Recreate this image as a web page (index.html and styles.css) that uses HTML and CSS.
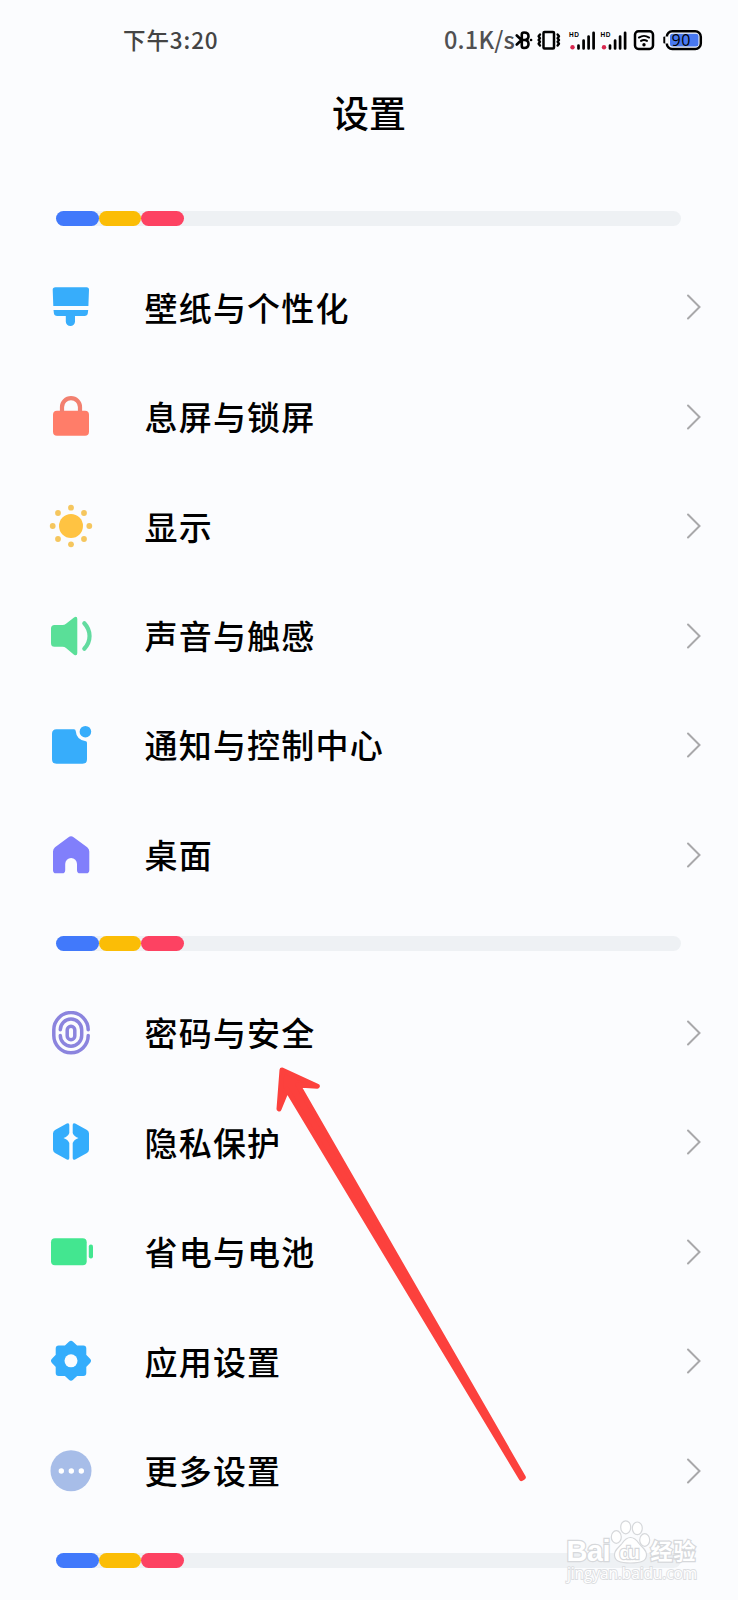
FILE: index.html
```html
<!DOCTYPE html>
<html lang="zh-CN">
<head>
<meta charset="utf-8">
<title>设置</title>
<link rel="stylesheet" href="styles.css">
</head>
<body>
<div class="screen">
  <header class="status">
    <span class="time">下午3:20</span>
    <div class="status-right">
      <span class="speed">0.1K/s</span>
      <svg class="status-icons" width="192" height="24" viewBox="0 0 192 24">
        <g fill="none" stroke="#000" stroke-width="2.600" stroke-linecap="round" stroke-linejoin="round">
          <path d="M6.800 11.500V6.500Q6.800 4.500 9 4.500q4.500 0 4.500 3.700T9.500 12q4 0 4 4t-4.500 4q-2.200 0-2.200-2V12.500M1.800 7.500 6.500 12h3M1.800 16.500 6.500 12M16 12h.1"/>
          <rect x="28.500" y="4" width="10.500" height="16.500" rx="1" stroke-width="2.500"/>
          <path d="M25 6.500l-1.400 1.800L25 10.200 23.600 12 25 13.800l-1.400 1.900L25 17.500M42.600 6.500 44 8.300l-1.400 1.900L44 12l-1.400 1.800 1.400 1.900-1.400 1.800" stroke-width="2.400"/>
        </g>
        <g stroke="#000" stroke-width="2.700" stroke-linecap="round">
          <path d="M63.500 17.500v3M68.600 12.500v8M73.600 8.500v12M78.600 4.800v15.700"/>
          <path d="M95 17.500v3M100.100 12.500v8M105.100 8.500v12M110.100 4.800v15.700"/>
        </g>
        <g class="hd"><text x="54" y="9" textLength="10">HD</text><text x="85.500" y="9" textLength="10">HD</text></g>
        <circle cx="57.500" cy="19.300" r="2.200" fill="#d8284f"/>
        <circle cx="89" cy="19.300" r="2.200" fill="#d8284f"/>
        <g fill="none" stroke="#000" stroke-width="2.500" stroke-linecap="round">
          <rect x="120" y="3.300" width="18" height="17.700" rx="3.500"/>
          <path d="M123.900 9.600q5.100-3.400 10.200 0M126 12.900q3-1.900 6 0" stroke-width="1.900"/>
          <rect x="151.800" y="3.300" width="34" height="17.700" rx="5.500"/>
          <path d="M149.300 9.500v5" stroke-width="2"/>
        </g>
        <circle cx="129" cy="16.700" r="1.700"/>
        <path d="M151.700 8.500v7" stroke="#fbfcfe" stroke-width="2.600"/>
        <rect x="155" y="5.800" width="28.500" height="12.700" rx="2.500" fill="#4878f0"/>
        <text class="level" x="156.500" y="17.600" textLength="19">90</text>
      </svg>
    </div>
  </header>
  <h1 class="title">设置</h1>

  <div class="divider"><div class="track"><i class="seg blue"></i><i class="seg yellow"></i><i class="seg red"></i></div></div>

  <ul class="group">
    <li class="row">
      <svg class="icon" viewBox="0 0 44 44" fill="#37adfb"><path d="M6.500 2.200h31q2.600 0 2.500 2.600L39.400 21H4.300L3.700 4.800Q3.600 2.200 6.500 2.200zM4.500 25h34.700l-.4 3.300q-.4 2.700-3.300 2.700H26v5.500a4.600 4.600 0 0 1-9.200 0V31H8.200q-2.900 0-3.300-2.700z"/></svg>
      <span class="label">壁纸与个性化</span><svg class="chev" viewBox="0 0 16 26"><path d="M2 1.500 13.500 13 2 24.500"/></svg>
    </li>
    <li class="row">
      <svg class="icon" viewBox="0 0 44 44"><rect x="4" y="15.700" width="36" height="25" rx="4" fill="#ff7d69"/><path d="M13 17v-5a9 8.800 0 0 1 18 0V17" fill="none" stroke="#f28070" stroke-width="4.200"/></svg>
      <span class="label">息屏与锁屏</span><svg class="chev" viewBox="0 0 16 26"><path d="M2 1.500 13.500 13 2 24.500"/></svg>
    </li>
    <li class="row">
      <svg class="icon" viewBox="0 0 44 44" fill="#ffc342"><circle cx="22" cy="22" r="12"/><g fill="#f5c65e"><circle cx="22" cy="3.700" r="2.900"/><circle cx="22" cy="40.300" r="2.900"/><circle cx="3.700" cy="22" r="2.900"/><circle cx="40.300" cy="22" r="2.900"/><circle cx="9" cy="9" r="2.900"/><circle cx="35" cy="9" r="2.900"/><circle cx="9" cy="35" r="2.900"/><circle cx="35" cy="35" r="2.900"/></g></svg>
      <span class="label">显示</span><svg class="chev" viewBox="0 0 16 26"><path d="M2 1.500 13.500 13 2 24.500"/></svg>
    </li>
    <li class="row">
      <svg class="icon" viewBox="0 0 44 44"><path d="M5.500 11H13.500Q15.500 11 17 9.800L25 3.400Q28.300 1.800 28.300 5V39Q28.300 42.400 25 40.800L17 34Q15.500 32.700 13.500 32.700H5.500Q2 32.700 2 29.200V14.500Q2 11 5.500 11z" fill="#5adf98"/><path d="M35.300 9.300c7 7.500 7 18 0 25.500" fill="none" stroke="#62dba0" stroke-width="4.200" stroke-linecap="round"/></svg>
      <span class="label">声音与触感</span><svg class="chev" viewBox="0 0 16 26"><path d="M2 1.500 13.500 13 2 24.500"/></svg>
    </li>
    <li class="row">
      <svg class="icon" viewBox="0 0 44 44" fill="#37adfb"><path d="M7.500 6.200H25Q26.600 6.200 26.700 8 27.500 16.500 36 18Q38 18.200 38 19.800V36.200Q38 40.700 33.500 40.700H7.500Q3 40.700 3 36.200V10.700Q3 6.200 7.500 6.200z"/><circle cx="36.400" cy="8.700" r="5.800"/></svg>
      <span class="label">通知与控制中心</span><svg class="chev" viewBox="0 0 16 26"><path d="M2 1.500 13.500 13 2 24.500"/></svg>
    </li>
    <li class="row">
      <svg class="icon" viewBox="0 0 44 44" fill="#817ffb"><path d="M19.500 4.200Q22 2.300 24.600 4.200L38.200 14.300Q40.300 16 40.300 18.500V37.200Q40.300 40.300 37.200 40.300H31Q28 40.300 28 37.200V31a5.900 6 0 0 0-11.800 0v6.200Q16.200 40.300 13.200 40.300H7Q4 40.300 4 37.200V18.500Q4 16 6 14.300z"/></svg>
      <span class="label">桌面</span><svg class="chev" viewBox="0 0 16 26"><path d="M2 1.500 13.500 13 2 24.500"/></svg>
    </li>
  </ul>

  <div class="divider"><div class="track"><i class="seg blue"></i><i class="seg yellow"></i><i class="seg red"></i></div></div>

  <ul class="group">
    <li class="row">
      <svg class="icon" viewBox="0 0 44 44" fill="none" stroke="#8b84de" stroke-width="3.500" stroke-linecap="round"><path d="M39.200 18.800A17.200 17.200 0 0 0 4.800 18.800V24.500A17.200 17.200 0 0 0 39.200 24.500"/><path d="M11.300 18.800a10.700 10.700 0 0 1 21.400 0v5.500M11.300 24.500a10.700 10.700 0 0 0 21.400 0"/><rect x="18.200" y="15.300" width="7.600" height="13.400" rx="3.800"/></svg>
      <span class="label">密码与安全</span><svg class="chev" viewBox="0 0 16 26"><path d="M2 1.500 13.500 13 2 24.500"/></svg>
    </li>
    <li class="row">
      <svg class="icon" viewBox="0 0 44 44" fill="#34adfc"><path d="M20.300 4.500Q20.300 2 17.800 3L6 9.500Q4 10.800 4 13V29Q4 31.200 6 32.500L17.800 38.800Q20.300 39.900 20.300 37.500V22.500Q19 19 14.500 17.500 19 16 20.300 12.500zM23.700 4.500Q23.700 2 26.200 3L38 9.500Q40 10.800 40 13V29Q40 31.200 38 32.500L26.200 38.800Q23.700 39.900 23.700 37.500V22.500Q25 19 29.500 17.500 25 16 23.700 12.500z" transform="translate(0 .6)"/></svg>
      <span class="label">隐私保护</span><svg class="chev" viewBox="0 0 16 26"><path d="M2 1.500 13.500 13 2 24.500"/></svg>
    </li>
    <li class="row">
      <svg class="icon" viewBox="0 0 44 44" fill="#43e690"><rect x="2" y="8.200" width="35.700" height="27" rx="4"/><rect x="39.800" y="14.500" width="4.200" height="14" rx="2"/></svg>
      <span class="label">省电与电池</span><svg class="chev" viewBox="0 0 16 26"><path d="M2 1.500 13.500 13 2 24.500"/></svg>
    </li>
    <li class="row">
      <svg class="icon" viewBox="0 0 44 44"><g transform="translate(0 .6)"><path d="M22 4.300 26.800 8.900H34.300V16.400L38.900 21.200 34.300 26V33.500H26.800L22 38.100 17.200 33.500H9.700V26L5.100 21.200 9.700 16.400V8.900H17.200z" fill="#34adfc" stroke="#34adfc" stroke-width="6" stroke-linejoin="round"/><circle cx="22" cy="21.200" r="6.500" fill="#fbfcfe"/></g></svg>
      <span class="label">应用设置</span><svg class="chev" viewBox="0 0 16 26"><path d="M2 1.500 13.500 13 2 24.500"/></svg>
    </li>
    <li class="row">
      <svg class="icon" viewBox="0 0 44 44" fill="#fff"><circle cx="22" cy="21.700" r="20.500" fill="#a7bde8"/><circle cx="12.300" cy="22" r="2.700"/><circle cx="22.300" cy="22" r="2.700"/><circle cx="32.300" cy="22" r="2.700"/></svg>
      <span class="label">更多设置</span><svg class="chev" viewBox="0 0 16 26"><path d="M2 1.500 13.500 13 2 24.500"/></svg>
    </li>
  </ul>

  <div class="divider"><div class="track"><i class="seg blue"></i><i class="seg yellow"></i><i class="seg red"></i></div></div>

  <svg class="arrow" width="280" height="450" viewBox="0 0 280 450"><path d="M22 20 57.300 36.300 38 35 263.300 427.300 261.300 428.500 27 39.500 19 59z"/></svg>

  <svg class="watermark" width="150" height="80" viewBox="0 0 150 80">
    <g class="brand">
      <text class="latin" x="6.500" y="51" textLength="44">Bai</text>
      <ellipse cx="56.300" cy="27" rx="5" ry="6.300"/>
      <ellipse cx="65.700" cy="17.300" rx="5" ry="6.500"/>
      <ellipse cx="77.300" cy="18.300" rx="5" ry="6.300"/>
      <ellipse cx="84.700" cy="30" rx="5" ry="6.300"/>
      <path d="M70.500 27.500c-4 0-6.500 3-8.500 6-3 4-8 6-7.500 12 .5 5.500 5 7.500 16 7.500s15.500-2 16-7.500c.5-6-4.500-8-7.500-12-2-3-4.500-6-8.500-6z"/>
      <text class="du" x="59.500" y="48.500" textLength="20">du</text>
      <text class="cjk" x="90.500" y="49" textLength="45">经验</text>
    </g>
    <text class="url" x="7" y="68.500" textLength="130">jingyan.baidu.com</text>
  </svg>
</div>
</body>
</html>
```
FILE: styles.css
```css
* { box-sizing: border-box; }
body { margin: 0; background: #fbfcfe; }
.screen {
  position: relative;
  width: 738px;
  height: 1600px;
  overflow: hidden;
  display: flex;
  flex-direction: column;
  background: #fbfcfe;
  color: #000;
  font-family: "Noto Sans CJK SC", sans-serif;
}
.status {
  height: 80px;
  flex: none;
  display: flex;
  justify-content: space-between;
  align-items: center;
  padding: 0 31px 0 123px;
  color: #444;
}
.time { font-size: 22.5px; font-weight: 500; letter-spacing: .9px; line-height: 30px; padding-bottom: 2px; }
.status-right { display: flex; align-items: center; }
.speed { font-size: 23.5px; line-height: 30px; letter-spacing: .2px; width: 71px; white-space: nowrap; padding-bottom: 2px; font-weight: 500; color: #505052; }
.status-icons { display: block; }
.hd text { font: 700 6.500px "Liberation Sans", sans-serif; }
.level { font: 400 16px "Open Sans", sans-serif; }
.title {
  flex: none;
  height: 103.700px;
  margin: 0;
  text-align: center;
  font-size: 37px;
  line-height: 65px;
  font-weight: 500;
}
.divider { flex: none; height: 69px; padding: 27px 56.900px 0 56.400px; }
.track { height: 15px; border-radius: 7.500px; background: #eef1f4; display: flex; }
.seg { width: 42.500px; height: 15px; border-radius: 7.500px; }
.blue { background: #4179fb; }
.yellow { background: #fbbd06; }
.red { background: #fd4262; }
.group { list-style: none; margin: 0; padding: 0; flex: none; }
.row {
  height: 109.450px;
  display: flex;
  align-items: center;
  padding: 0 36px 0 49px;
}
.icon { width: 44px; height: 44px; flex: none; }
.label {
  flex: 1;
  margin-left: 51.500px;
  padding-bottom: 1.500px;
  font-size: 33px;
  line-height: 48px;
  letter-spacing: 1.200px;
  font-weight: 500;
}
.chev { width: 16px; height: 26px; flex: none; fill: none; stroke: #a8a8aa; stroke-width: 2; stroke-linecap: round; }
.arrow { position: absolute; left: 260px; top: 1050px; fill: #fc413d; stroke: #fc413d; stroke-width: 5; stroke-linejoin: round; }
.watermark { position: absolute; left: 560px; top: 1510px; }
.brand { fill: #fff; stroke: #d6d8db; stroke-width: 1.200; }
.brand text { paint-order: stroke; stroke-width: 2.400; }
.latin { font: 700 29px "Liberation Sans", sans-serif; }
.du { font: 700 19px "Liberation Sans", sans-serif; }
.cjk { font: 700 22px "Noto Sans CJK SC", sans-serif; }
.url { font: 400 15.500px "Open Sans", sans-serif; fill: #fff; stroke: #dcdee1; stroke-width: 1.800; paint-order: stroke; }
```
